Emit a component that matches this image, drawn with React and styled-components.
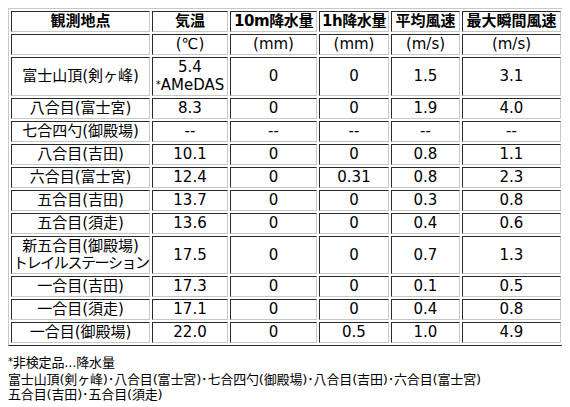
import React from 'react';
import styled, { createGlobalStyle } from 'styled-components';

const GlobalStyle = createGlobalStyle`
  body {
    margin: 8px;
    background: #fff;
    color: #000;
    font-family: "DejaVu Sans", "Noto Sans CJK JP", sans-serif;
  }
`;

const Table = styled.table`
  width: 556px;
  table-layout: fixed;
  border-collapse: separate;
  border-spacing: 2px;
  border: 1px solid;
  border-color: #c8c8c8 #2a2a2a #2a2a2a #c8c8c8;
  font-size: 15px;
  line-height: 17px;
`;

const Col = styled.col`
  width: ${p => p.$w}px;
`;

const cellBase = `
  padding: 1px;
  border: 1px solid;
  border-color: #2a2a2a #c8c8c8 #c8c8c8 #2a2a2a;
  text-align: center;
  vertical-align: middle;
  white-space: nowrap;
`;

const Head = styled.th`
  ${cellBase}
  font-weight: bold;
  letter-spacing: ${p => (p.$tight ? '-0.4px' : 'normal')};
`;

const Cell = styled.td`
  ${cellBase}
  font-weight: normal;
`;

const Line = styled.div`
  letter-spacing: ${p => (p.$tight ? '-1.4px' : 'normal')};
`;

const Mark = styled.span`
  font-size: 10px;
  vertical-align: 2px;
`;

const Notes = styled.div`
  margin-top: 8px;
  font-size: 13px;
  line-height: 15px;
  letter-spacing: -0.15px;
`;

const NoteLead = styled.div`
  margin-bottom: 2px;
`;

const widths = [139, 76, 87, 70, 69, 99];

const heads = ['観測地点', '気温', '10m降水量', '1h降水量', '平均風速', '最大瞬間風速'];
const units = ['', '(℃)', '(mm)', '(mm)', '(m/s)', '(m/s)'];

const rows = [
  ['富士山頂(剣ヶ峰)', ['5.4', '*AMeDAS'], '0', '0', '1.5', '3.1'],
  ['八合目(富士宮)', '8.3', '0', '0', '1.9', '4.0'],
  ['七合四勺(御殿場)', '--', '--', '--', '--', '--'],
  ['八合目(吉田)', '10.1', '0', '0', '0.8', '1.1'],
  ['六合目(富士宮)', '12.4', '0', '0.31', '0.8', '2.3'],
  ['五合目(吉田)', '13.7', '0', '0', '0.3', '0.8'],
  ['五合目(須走)', '13.6', '0', '0', '0.4', '0.6'],
  [['新五合目(御殿場)', 'トレイルステーション'], '17.5', '0', '0', '0.7', '1.3'],
  ['一合目(吉田)', '17.3', '0', '0', '0.1', '0.5'],
  ['一合目(須走)', '17.1', '0', '0', '0.4', '0.8'],
  ['一合目(御殿場)', '22.0', '0', '0.5', '1.0', '4.9'],
];

const renderValue = value => {
  if (!Array.isArray(value)) return value;
  return value.map(line => {
    if (line.startsWith('*')) {
      return (
        <Line key={line}>
          <Mark>*</Mark>
          {line.slice(1)}
        </Line>
      );
    }
    return (
      <Line key={line} $tight={line.length > 9}>
        {line}
      </Line>
    );
  });
};

const App = () => (
  <>
    <GlobalStyle />
    <Table>
      <colgroup>
        {widths.map((w, i) => (
          <Col key={i} $w={w} />
        ))}
      </colgroup>
      <tbody>
        <tr>
          {heads.map(h => (
            <Head key={h} $tight={h.startsWith('1')}>
              {h}
            </Head>
          ))}
        </tr>
        <tr>
          {units.map((u, i) => (
            <Cell key={i}>{u || '\u00a0'}</Cell>
          ))}
        </tr>
        {rows.map((row, r) => (
          <tr key={r}>
            {row.map((value, i) => (
              <Cell key={i}>{renderValue(value)}</Cell>
            ))}
          </tr>
        ))}
      </tbody>
    </Table>
    <Notes>
      <NoteLead>
        <Mark>*</Mark>非検定品...降水量
      </NoteLead>
      <div>富士山頂(剣ヶ峰)･八合目(富士宮)･七合四勺(御殿場)･八合目(吉田)･六合目(富士宮)</div>
      <div>五合目(吉田)･五合目(須走)</div>
    </Notes>
  </>
);

export default App;
